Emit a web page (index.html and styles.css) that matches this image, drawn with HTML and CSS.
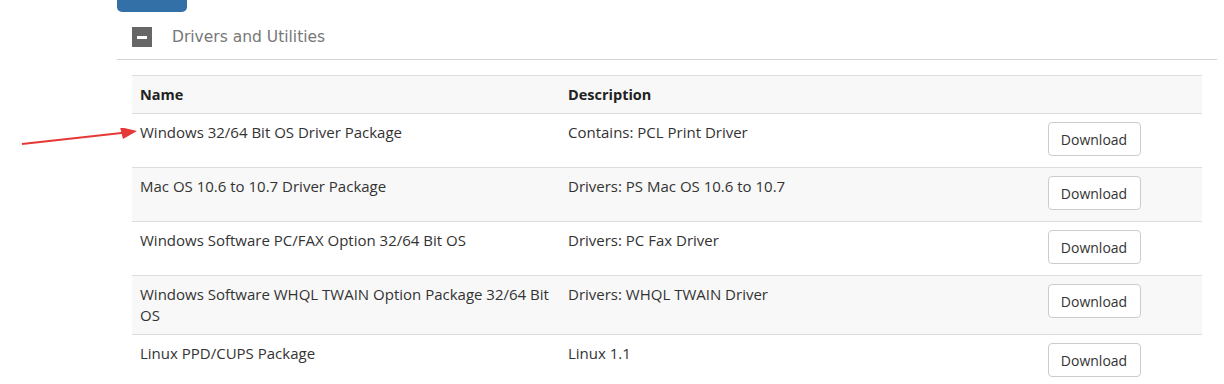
FILE: index.html
```html
<!DOCTYPE html>
<html lang="en">
<head>
    <meta charset="UTF-8">
    <title>Drivers and Utilities</title>
    <link rel="stylesheet" href="styles.css">
</head>
<body>

    <div class="panel">
        <!-- bottom of the button from the section above -->
        <div class="prev-btn"></div>

        <div class="section-head">
            <span class="toggle"><span class="bar"></span></span>
            <span class="section-title">Drivers and Utilities</span>
        </div>

        <div class="section-body">
            <table class="downloads">
                <colgroup>
                    <col class="col-name">
                    <col class="col-desc">
                    <col class="col-action">
                </colgroup>
                <thead>
                    <tr>
                        <th>Name</th>
                        <th>Description</th>
                        <th></th>
                    </tr>
                </thead>
                <tbody>
                    <tr>
                        <td>Windows 32/64 Bit OS Driver Package</td>
                        <td>Contains: PCL Print Driver</td>
                        <td><button class="btn">Download</button></td>
                    </tr>
                    <tr>
                        <td>Mac OS 10.6 to 10.7 Driver Package</td>
                        <td>Drivers: PS Mac OS 10.6 to 10.7</td>
                        <td><button class="btn">Download</button></td>
                    </tr>
                    <tr>
                        <td>Windows Software PC/FAX Option 32/64 Bit OS</td>
                        <td>Drivers: PC Fax Driver</td>
                        <td><button class="btn">Download</button></td>
                    </tr>
                    <tr>
                        <td>Windows Software WHQL TWAIN Option Package 32/64 Bit OS</td>
                        <td>Drivers: WHQL TWAIN Driver</td>
                        <td><button class="btn">Download</button></td>
                    </tr>
                    <tr>
                        <td>Linux PPD/CUPS Package</td>
                        <td>Linux 1.1</td>
                        <td><button class="btn">Download</button></td>
                    </tr>
                </tbody>
            </table>
        </div>
    </div>

    <!-- annotation arrow -->
    <svg class="pointer" width="140" height="30" viewBox="0 0 140 30">
        <line x1="22" y1="16" x2="126" y2="4.5" stroke="#e53935" stroke-width="2.2"/>
        <polygon points="137,3 120,-1 123,11" fill="#e53935"/>
    </svg>

</body>
</html>
```

FILE: styles.css
```css
body {
    margin: 0;
    font-family: "Open Sans", "Liberation Sans", sans-serif;
    font-size: 15px;
    color: #333;
    background: #fff;
}

.panel {
    margin-left: 117px;
    width: 1100px;
}

.prev-btn {
    width: 70px;
    height: 12px;
    background: #3470a8;
    border-radius: 0 0 5px 5px;
}

.section-head {
    display: flex;
    align-items: center;
    gap: 20px;
    height: 47px;
    padding-left: 15px;
    border-bottom: 1px solid #d4d4d4;
}

.toggle {
    width: 20px;
    height: 20px;
    margin-top: 3px;
    background: #666;
    display: flex;
    align-items: center;
    justify-content: center;
}

.toggle .bar {
    width: 10px;
    height: 3px;
    background: #fff;
}

.section-title {
    font-family: "DejaVu Sans", sans-serif;
    font-size: 15.5px;
    color: #777;
    padding-top: 3px;
}

.section-body {
    padding: 15px 15px 0;
}

.downloads {
    width: 100%;
    border-collapse: collapse;
    table-layout: fixed;
    line-height: 21px;
}

.col-name { width: 40%; }
.col-desc { width: 45%; }

.downloads th,
.downloads td {
    padding: 8px;
    text-align: left;
    vertical-align: top;
    border-top: 1px solid #ddd;
}

.downloads th {
    font-weight: bold;
    font-size: 14.5px;
    color: #222;
}

.downloads thead tr,
.downloads tbody tr:nth-child(even) {
    background: #f8f8f8;
}

.btn {
    font-family: "Open Sans", "Liberation Sans", sans-serif;
    font-size: 14px;
    color: #333;
    background: #fff;
    border: 1px solid #ccc;
    border-radius: 4px;
    height: 34px;
    width: 93px;
    margin-left: -2px;
    margin-bottom: 3px;
    display: block;
    cursor: pointer;
}

.pointer {
    position: absolute;
    left: 0;
    top: 128px;
}
```
